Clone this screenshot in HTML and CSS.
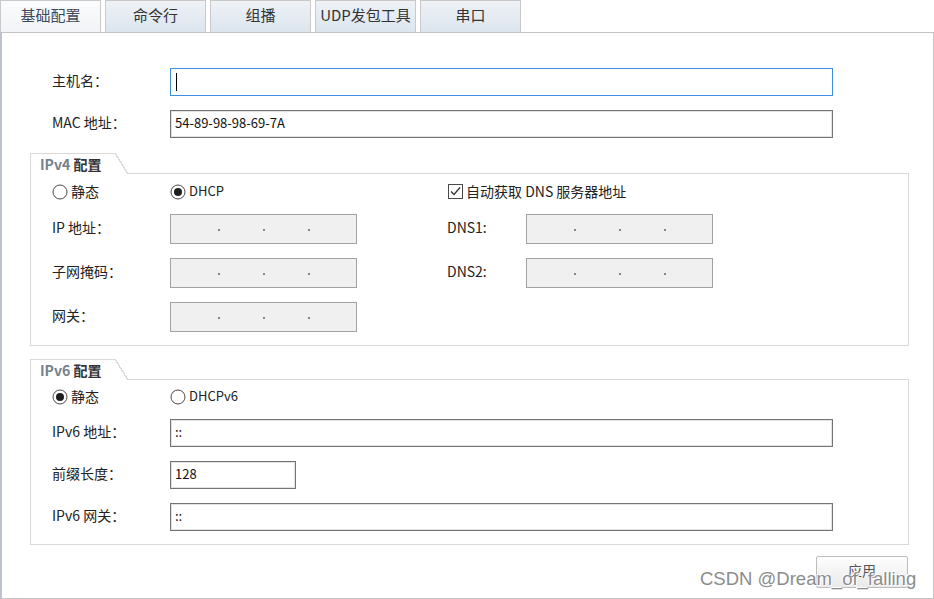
FILE: index.html
```html
<!DOCTYPE html>
<html lang="zh-CN">
<head>
<meta charset="utf-8">
<title>基础配置</title>
<link rel="stylesheet" href="styles.css">
</head>
<body>
<div class="window">
  <div class="tabs">
    <div class="tab active">基础配置</div>
    <div class="tab">命令行</div>
    <div class="tab">组播</div>
    <div class="tab">UDP发包工具</div>
    <div class="tab">串口</div>
  </div>
  <div class="panel">
    <div class="basic">
      <div class="label">主机名：</div>
      <div class="field focus"><span class="caret"></span></div>
      <div class="label">MAC 地址：</div>
      <div class="field">54-89-98-98-69-7A</div>
    </div>

    <div class="group g4">
      <div class="legend"><span class="lg-en">IPv4</span> 配置</div>
      <div class="gbox">
        <div class="v4">
          <div class="radio">
            <svg width="16" height="16" viewBox="0 0 16 16"><circle cx="8" cy="8" r="7" fill="#fff" stroke="#4a4a4a" stroke-width="1"/></svg>
            <span>静态</span>
          </div>
          <div class="radio">
            <svg width="16" height="16" viewBox="0 0 16 16"><circle cx="8" cy="8" r="7" fill="#fff" stroke="#4a4a4a" stroke-width="1"/><circle cx="8" cy="8" r="4" fill="#1e1e1e"/></svg>
            <span class="en">DHCP</span>
          </div>
          <div class="check">
            <svg width="15" height="15" viewBox="0 0 15 15"><rect x="0.5" y="0.5" width="14" height="14" fill="#fff" stroke="#4a4a4a"/><path d="M3 7.5 L6 10.5 L12 3.5" fill="none" stroke="#333" stroke-width="1.3"/></svg>
            <span>自动获取 DNS 服务器地址</span>
          </div>

          <div class="label">IP 地址：</div>
          <div class="ipf"><i></i><i></i><i></i></div>
          <div class="label c4">DNS1:</div>
          <div class="ipf"><i></i><i></i><i></i></div>

          <div class="label">子网掩码：</div>
          <div class="ipf"><i></i><i></i><i></i></div>
          <div class="label c4">DNS2:</div>
          <div class="ipf"><i></i><i></i><i></i></div>

          <div class="label">网关：</div>
          <div class="ipf"><i></i><i></i><i></i></div>
        </div>
      </div>
    </div>

    <div class="group g6">
      <div class="legend"><span class="lg-en">IPv6</span> 配置</div>
      <div class="gbox">
        <div class="v6">
          <div class="radio">
            <svg width="16" height="16" viewBox="0 0 16 16"><circle cx="8" cy="8" r="7" fill="#fff" stroke="#4a4a4a" stroke-width="1"/><circle cx="8" cy="8" r="4" fill="#1e1e1e"/></svg>
            <span>静态</span>
          </div>
          <div class="radio">
            <svg width="16" height="16" viewBox="0 0 16 16"><circle cx="8" cy="8" r="7" fill="#fff" stroke="#4a4a4a" stroke-width="1"/></svg>
            <span class="en">DHCPv6</span>
          </div>

          <div class="label">IPv6 地址：</div>
          <div class="field">::</div>

          <div class="label">前缀长度：</div>
          <div class="field short">128</div>

          <div class="label">IPv6 网关：</div>
          <div class="field">::</div>
        </div>
      </div>
    </div>

    <div class="actions">
      <button class="btn" type="button">应用</button>
    </div>
  </div>
  <div class="watermark">CSDN @Dream_of_falling</div>
</div>
</body>
</html>
```

FILE: styles.css
```css
* {
  box-sizing: border-box;
}

body {
  margin: 0;
  background: #fff;
  font-family: "Noto Sans CJK SC", sans-serif;
  font-size: 14px;
  color: #222;
}

.window {
  position: relative;
  width: 934px;
  height: 599px;
  overflow: hidden;
}

/* ---------- tabs ---------- */
.tabs {
  display: flex;
  gap: 4px;
  height: 32px;
}

.tab {
  width: 101px;
  height: 32px;
  border: 1px solid #c9c9c9;
  border-bottom: none;
  background: linear-gradient(#eef2f7, #dce5ee);
  display: flex;
  align-items: center;
  justify-content: center;
  padding-bottom: 4px;
  font-size: 15px;
  color: #333;
}

.tab.active {
  background: linear-gradient(#fbfcfd, #f1f3f6);
  color: #3b4a5c;
}

/* ---------- panel ---------- */
.panel {
  height: 567px;
  border: 1px solid #c3c3c3;
  border-left: 2px solid #bcc3ca;
  padding: 35px 0 0 28px;
}

.basic {
  display: grid;
  grid-template-columns: 118px 663px;
  grid-template-rows: 28px 28px;
  row-gap: 14px;
  align-items: center;
  padding-left: 22px;
}

.label {
  font-size: 14px;
  color: #222;
  white-space: nowrap;
  padding-bottom: 5px;
}

.field {
  height: 28px;
  border: 1px solid #747474;
  box-shadow: inset 0 0 0 1px #e2e2e2;
  background: #fff;
  padding: 0 4px 3px;
  display: flex;
  align-items: center;
  font-size: 13px;
  color: #111;
}

.field.focus {
  border-color: #3d8fe0;
  box-shadow: none;
  padding-bottom: 0;
}

.field.short {
  width: 126px;
}

.caret {
  display: block;
  width: 1px;
  height: 18px;
  background: #000;
  margin-left: 1px;
}

/* ---------- group boxes ---------- */
.group {
  width: 879px;
}

.g4 {
  margin-top: 15px;
}

.g6 {
  margin-top: 13px;
}

.legend {
  position: relative;
  z-index: 1;
  width: 85px;
  height: 21px;
  margin-bottom: -1px;
  border-top: 1px solid #d9d9d9;
  border-left: 1px solid #d9d9d9;
  background: #fff;
  padding-left: 9px;
  font-weight: bold;
  font-size: 14px;
  line-height: 20px;
  color: #333;
  white-space: nowrap;
}

.legend::after {
  content: "";
  position: absolute;
  top: -1px;
  left: 100%;
  width: 13px;
  height: 21px;
  background: linear-gradient(to top right,
    #fff calc(50% - 0.7px),
    #d9d9d9 calc(50% - 0.7px),
    #d9d9d9 calc(50% + 0.7px),
    transparent calc(50% + 0.7px));
}

.lg-en {
  color: #76818c;
}

.gbox {
  border: 1px solid #d9d9d9;
  padding: 9px 0 13px 21px;
}

.g6 .gbox {
  padding-top: 8px;
}

.v4 {
  display: grid;
  grid-template-columns: 118px 187px 90px 79px 187px;
  grid-template-rows: 17px 30px 30px 30px;
  row-gap: 14px;
  align-items: center;
}

.v6 {
  display: grid;
  grid-template-columns: 118px 663px;
  grid-template-rows: 17px 28px 28px 28px;
  row-gap: 14px;
  align-items: center;
}

.radio,
.check {
  display: flex;
  align-items: center;
  gap: 3px;
  font-size: 14px;
  white-space: nowrap;
}

.radio span,
.check span {
  margin-top: -2px;
}

.radio .en {
  font-size: 13px;
}

.radio svg,
.check svg {
  flex: none;
}

.check {
  grid-column: 4 / span 2;
  padding-left: 1px;
}

.c4 {
  grid-column: 4;
}

.ipf {
  height: 30px;
  border: 1px solid #a2a2a2;
  background: #f0f0f0;
  display: flex;
  align-items: center;
  gap: 43px;
  padding-left: 47px;
}

.ipf i {
  display: block;
  width: 2px;
  height: 2px;
  margin-top: 2px;
  background: #8f8677;
}

/* ---------- actions ---------- */
.actions {
  width: 879px;
  margin-top: 11px;
  padding-right: 1px;
  display: flex;
  justify-content: flex-end;
}

.btn {
  width: 92px;
  height: 32px;
  border: 1px solid #bdbdbd;
  border-radius: 2px;
  background: linear-gradient(#fefefe, #e9e9e9);
  font-family: "Noto Sans CJK SC", sans-serif;
  font-size: 14px;
  color: #555;
  padding: 0 0 4px;
}

/* ---------- watermark overlay ---------- */
.watermark {
  position: absolute;
  left: 700px;
  top: 568px;
  font-family: "Liberation Sans", sans-serif;
  font-size: 18.5px;
  line-height: 21px;
  color: #8c8c8c;
  white-space: nowrap;
  text-shadow: 0 0 2px #fff, 1px 1px 0 #fff, -1px -1px 0 #fff;
}
```
